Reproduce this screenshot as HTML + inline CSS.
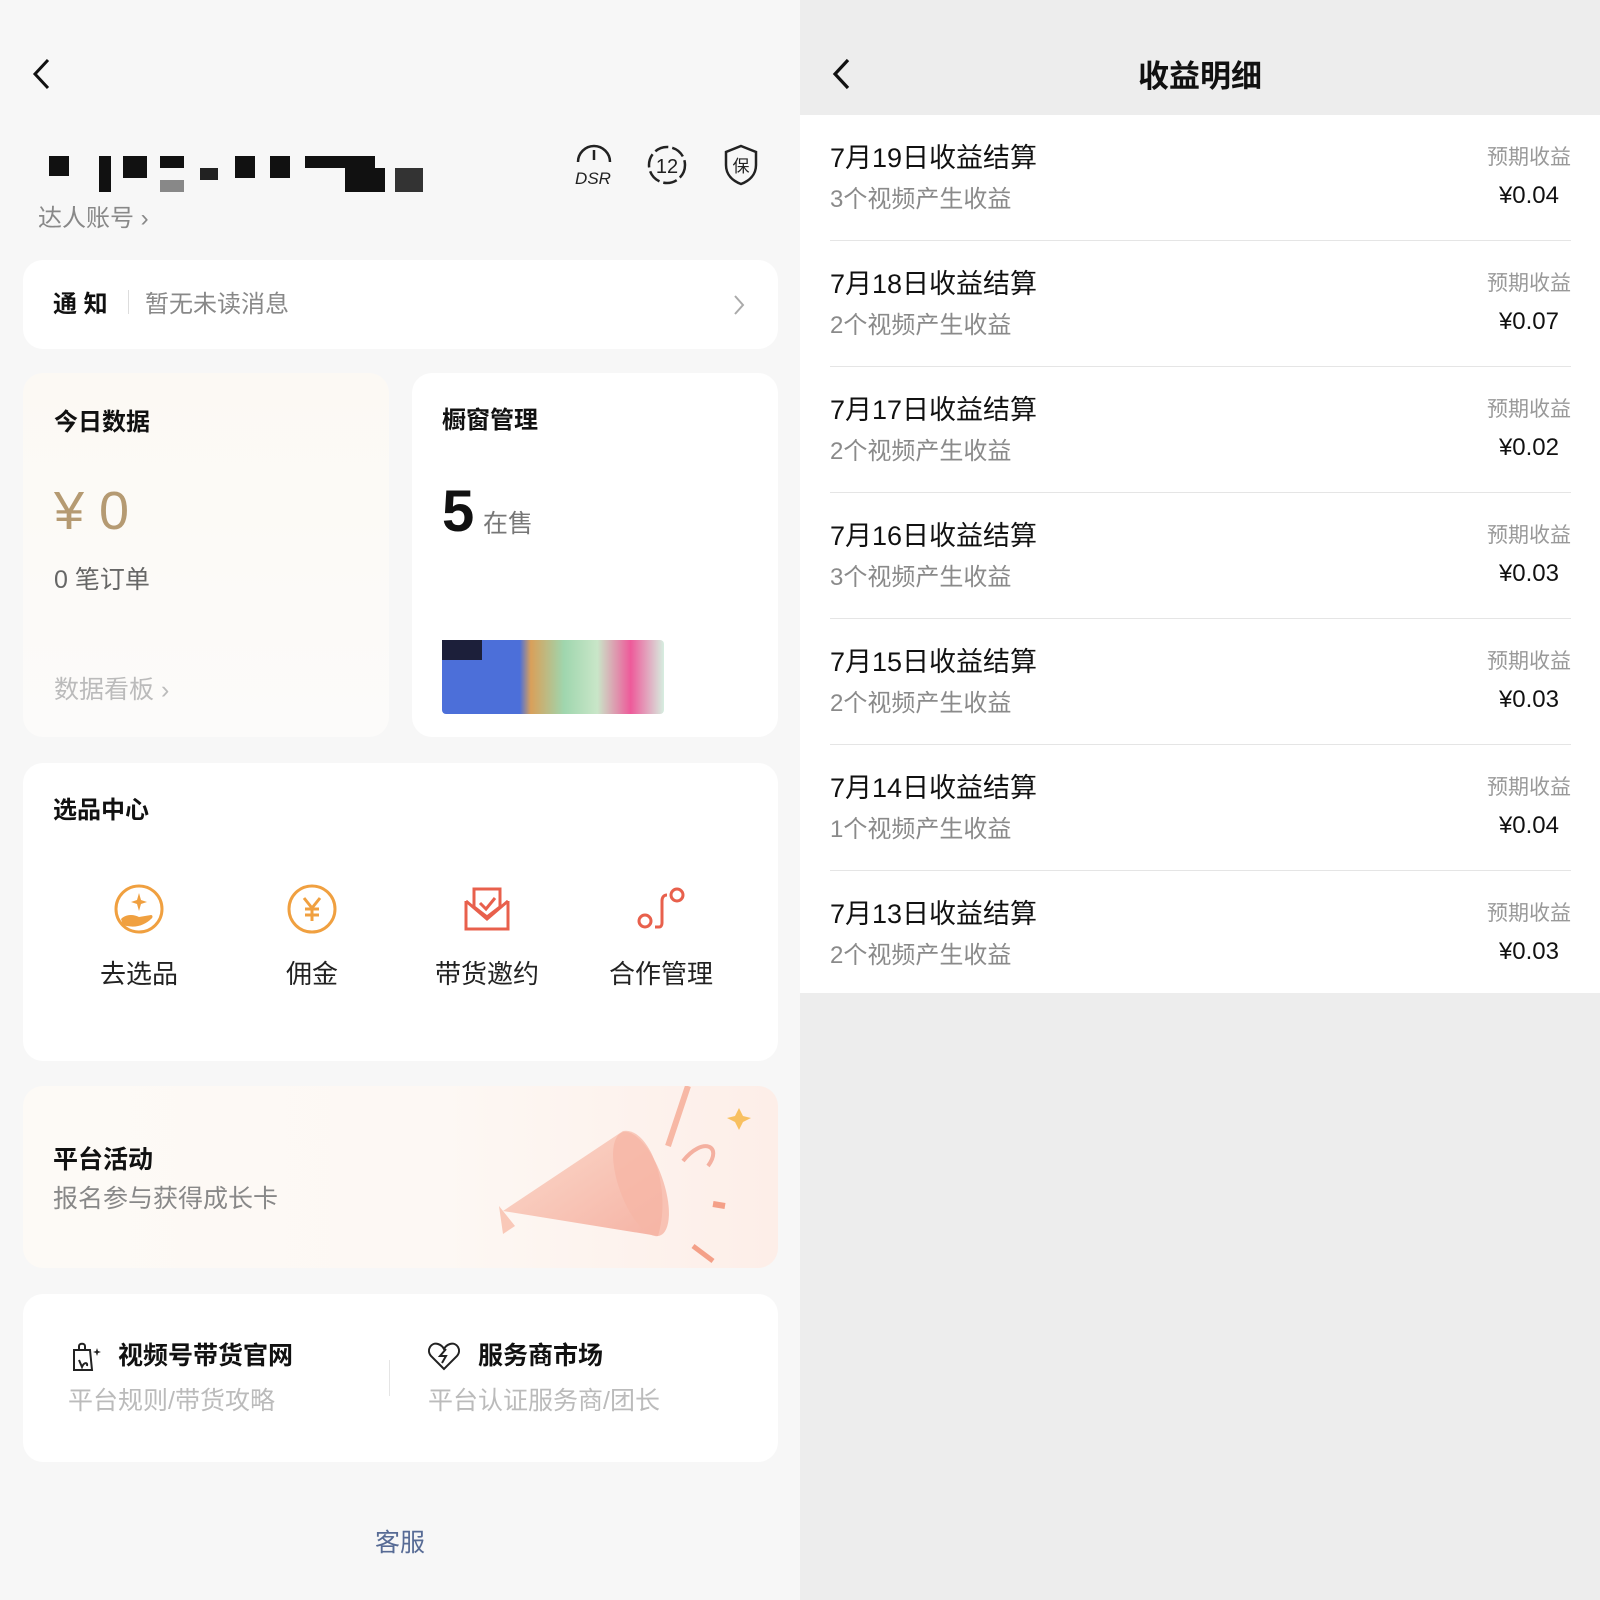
<!DOCTYPE html>
<html><head><meta charset="utf-8"><style>
*{margin:0;padding:0;box-sizing:border-box}
body{width:1600px;height:1600px;overflow:hidden;position:relative;font-family:"Liberation Sans","Noto Sans CJK SC",sans-serif;background:#f7f7f7}
.a{position:absolute;white-space:nowrap}
#L{position:absolute;left:0;top:0;width:800px;height:1600px;background:#f7f7f7}
#R{position:absolute;left:800px;top:0;width:800px;height:1600px;background:#ededed}
.card{position:absolute;background:#fff;border-radius:20px}
.t{font-size:24px;font-weight:bold;color:#111}
.g{color:#888;font-size:24px}
.row{position:absolute;left:0;width:800px;height:126px}
.row .h{position:absolute;left:30px;top:21px;font-size:27px;color:#111}
.row .s{position:absolute;left:30px;top:64px;font-size:24px;color:#8a8a8a}
.row .p{position:absolute;right:29px;top:26px;font-size:21px;color:#999}
.row .m{position:absolute;right:41px;top:67px;font-size:24px;color:#111}
.row .ln{position:absolute;left:30px;right:29px;bottom:0;height:1px;background:#e5e5e5}
</style></head><body>
<div id="L">
<svg class="a" style="left:30px;top:58px" width="24" height="32" viewBox="0 0 24 32"><path d="M18 2 L5 16 L18 30" fill="none" stroke="#111" stroke-width="3"/></svg>
<div class="a" style="left:49px;top:156px;width:20px;height:20px;background:#111"></div>
<div class="a" style="left:99px;top:156px;width:12px;height:36px;background:#111"></div>
<div class="a" style="left:123px;top:156px;width:24px;height:22px;background:#111"></div>
<div class="a" style="left:160px;top:156px;width:24px;height:12px;background:#111"></div>
<div class="a" style="left:160px;top:180px;width:24px;height:12px;background:#888"></div>
<div class="a" style="left:200px;top:168px;width:18px;height:12px;background:#222"></div>
<div class="a" style="left:235px;top:156px;width:20px;height:22px;background:#111"></div>
<div class="a" style="left:270px;top:156px;width:20px;height:22px;background:#111"></div>
<div class="a" style="left:305px;top:156px;width:70px;height:12px;background:#111"></div>
<div class="a" style="left:345px;top:168px;width:40px;height:24px;background:#111"></div>
<div class="a" style="left:395px;top:168px;width:28px;height:24px;background:#333"></div>
<div class="a" style="left:38px;top:198px;font-size:24px;color:#888">达人账号 ›</div>
<svg class="a" style="left:572px;top:142px" width="44" height="44" viewBox="0 0 44 44"><path d="M6 20 A16 16 0 0 1 38 20" fill="none" stroke="#222" stroke-width="2.5"/><path d="M22 8 V18" stroke="#222" stroke-width="2.5"/><text x="21" y="42" font-size="17" font-style="italic" font-family="Liberation Sans" text-anchor="middle" fill="#222">DSR</text></svg>
<svg class="a" style="left:646px;top:144px" width="42" height="42" viewBox="0 0 42 42"><circle cx="21" cy="21" r="18" fill="none" stroke="#222" stroke-width="2.5" stroke-dasharray="14 4"/><text x="21" y="29" font-size="20" font-family="Liberation Sans" text-anchor="middle" fill="#222">12</text></svg>
<svg class="a" style="left:722px;top:143px" width="38" height="44" viewBox="0 0 38 44"><path d="M19 3 L34 9 V22 C34 32 27 38 19 41 C11 38 4 32 4 22 V9 Z" fill="none" stroke="#222" stroke-width="2.5"/><text x="19" y="29" font-size="17" font-family="Noto Sans CJK SC" text-anchor="middle" fill="#222">保</text></svg>

<div class="card" style="left:23px;top:260px;width:755px;height:89px"></div>
<div class="a t" style="left:53px;top:284px">通 知</div>
<div class="a" style="left:128px;top:290px;width:1px;height:24px;background:#ddd"></div>
<div class="a g" style="left:145px;top:284px">暂无未读消息</div>
<svg class="a" style="left:732px;top:294px" width="14" height="22" viewBox="0 0 14 22"><path d="M3 2 L11 11 L3 20" fill="none" stroke="#aaa" stroke-width="2"/></svg>

<div class="card" style="left:23px;top:373px;width:366px;height:364px;background:linear-gradient(180deg,#fcf9f4,#fcfbfa)"></div>
<div class="a t" style="left:54px;top:402px">今日数据</div>
<div class="a" style="left:54px;top:480px;font-size:54px;color:#b59a72">¥ 0</div>
<div class="a" style="left:54px;top:560px;font-size:25px;color:#666">0 笔订单</div>
<div class="a" style="left:54px;top:670px;font-size:25px;color:#bbb">数据看板 ›</div>

<div class="card" style="left:412px;top:373px;width:366px;height:364px"></div>
<div class="a t" style="left:442px;top:400px">橱窗管理</div>
<div class="a" style="left:442px;top:478px;font-size:58px;font-weight:bold;color:#111">5</div>
<div class="a" style="left:483px;top:504px;font-size:25px;color:#777">在售</div>
<div class="a" style="left:442px;top:640px;width:222px;height:74px;background:linear-gradient(90deg,#4c6fd9 0,#4c6fd9 35%,#d9a05a 40%,#9fd6ae 55%,#c9e6c8 70%,#ee5a9a 85%,#d6eee0 100%);border-radius:4px"></div>
<div class="a" style="left:442px;top:640px;width:40px;height:20px;background:#1c1f3a"></div>

<div class="card" style="left:23px;top:763px;width:755px;height:298px"></div>
<div class="a t" style="left:53px;top:790px">选品中心</div>
<svg class="a" style="left:113px;top:883px" width="52" height="52" viewBox="0 0 52 52"><circle cx="26" cy="26" r="23" fill="none" stroke="#f0a040" stroke-width="3"/><path d="M26 10 L28 17 L34 19 L28 21 L26 28 L24 21 L18 19 L24 17Z" fill="#f0a040"/><path d="M8 36 C14 30 22 32 26 34 L38 32 C40 32 40 35 38 36 C32 42 22 46 10 42Z" fill="#f0a040"/></svg>
<svg class="a" style="left:286px;top:883px" width="52" height="52" viewBox="0 0 52 52"><circle cx="26" cy="26" r="23" fill="none" stroke="#f0a040" stroke-width="3"/><path d="M18 15 L26 25 L34 15 M26 25 V38 M19 26 H33 M19 32 H33" fill="none" stroke="#f0a040" stroke-width="3"/></svg>
<svg class="a" style="left:461px;top:883px" width="52" height="52" viewBox="0 0 52 52"><path d="M5 18 V46 H47 V18" fill="none" stroke="#e8604c" stroke-width="3"/><path d="M13 24 V6 H39 V24 L26 34 Z" fill="none" stroke="#e8604c" stroke-width="3"/><path d="M19 20 L25 26 L34 15" fill="none" stroke="#e8604c" stroke-width="3"/><path d="M5 18 L26 36 L47 18" fill="none" stroke="#e8604c" stroke-width="3"/></svg>
<svg class="a" style="left:635px;top:883px" width="52" height="52" viewBox="0 0 52 52"><circle cx="10" cy="38" r="6" fill="none" stroke="#e8604c" stroke-width="3"/><circle cx="42" cy="12" r="6" fill="none" stroke="#e8604c" stroke-width="3"/><path d="M20 44 H24 C26 44 27 42 27 40 V18 C27 14 29 12 32 12" fill="none" stroke="#e8604c" stroke-width="3"/></svg>
<div class="a" style="left:89px;top:954px;width:100px;text-align:center;font-size:26px;color:#222">去选品</div>
<div class="a" style="left:262px;top:954px;width:100px;text-align:center;font-size:26px;color:#222">佣金</div>
<div class="a" style="left:427px;top:954px;width:120px;text-align:center;font-size:26px;color:#222">带货邀约</div>
<div class="a" style="left:601px;top:954px;width:120px;text-align:center;font-size:26px;color:#222">合作管理</div>

<div class="card" style="left:23px;top:1086px;width:755px;height:182px;background:linear-gradient(90deg,#fdfaf6 0,#fdf8f4 55%,#fdeee8 100%);overflow:hidden">
<svg style="position:absolute;left:450px;top:0" width="305" height="182" viewBox="0 0 305 182"><defs><linearGradient id="mg" x1="0" y1="0" x2="1" y2="1"><stop offset="0" stop-color="#fbd5c5"/><stop offset="1" stop-color="#f4a898"/></linearGradient></defs><path d="M30 125 L150 45 C175 40 200 100 185 150 Z" fill="url(#mg)" opacity=".85"/><ellipse cx="168" cy="98" rx="22" ry="55" transform="rotate(-20 168 98)" fill="#f6b6a6" opacity=".8"/><path d="M26 120 L42 140 L30 148 Z" fill="#f9c8b8"/><path d="M215 0 L195 60" stroke="#f4a088" stroke-width="6" fill="none" opacity=".7"/><path d="M210 75 C230 50 250 60 235 80" stroke="#f4b0a0" stroke-width="4" fill="none"/><path d="M262 30 L266 22 L270 30 L278 32 L270 36 L266 44 L262 36 L254 32Z" fill="#f8c060"/><path d="M240 118 L252 120" stroke="#f4a088" stroke-width="6"/><path d="M220 160 L240 175" stroke="#f4a088" stroke-width="5"/></svg>
</div>
<div class="a t" style="left:53px;top:1140px;font-size:25px">平台活动</div>
<div class="a" style="left:53px;top:1179px;font-size:25px;color:#888">报名参与获得成长卡</div>

<div class="card" style="left:23px;top:1294px;width:755px;height:168px"></div>
<svg class="a" style="left:70px;top:1340px" width="34" height="34" viewBox="0 0 34 34"><path d="M4 10 H20 L22 30 H4 Z M9 10 V6 C9 3 15 3 15 6 V10" fill="none" stroke="#222" stroke-width="2"/><path d="M9 20 L12 27 C14 22 18 22 17 26" fill="none" stroke="#222" stroke-width="2"/><path d="M27 8 L28 11 L31 12 L28 13 L27 16 L26 13 L23 12 L26 11Z" fill="#222"/></svg>
<div class="a t" style="left:118px;top:1336px;font-size:25px">视频号带货官网</div>
<div class="a" style="left:68px;top:1381px;font-size:25px;color:#bbb">平台规则/带货攻略</div>
<div class="a" style="left:389px;top:1360px;width:1px;height:36px;background:#e5e5e5"></div>
<svg class="a" style="left:427px;top:1340px" width="34" height="32" viewBox="0 0 34 32"><path d="M17 29 L4 16 C-1 10 4 2 11 4 C14 5 16 7 17 9 C18 7 20 5 23 4 C30 2 35 10 30 16 Z" fill="none" stroke="#222" stroke-width="2"/><path d="M19 9 L13 16 H19 L15 23" fill="none" stroke="#222" stroke-width="2"/></svg>
<div class="a t" style="left:478px;top:1336px;font-size:25px">服务商市场</div>
<div class="a" style="left:428px;top:1381px;font-size:25px;color:#bbb">平台认证服务商/团长</div>
<div class="a" style="left:360px;top:1523px;width:80px;text-align:center;font-size:25px;color:#576b95">客服</div>
</div>

<div id="R">
<svg class="a" style="left:30px;top:58px" width="24" height="32" viewBox="0 0 24 32"><path d="M18 2 L5 16 L18 30" fill="none" stroke="#111" stroke-width="3.2"/></svg>
<div class="a" style="left:300px;top:51px;width:200px;text-align:center;font-size:31px;font-weight:bold;color:#111">收益明细</div>
<div class="a" style="left:0;top:115px;width:800px;height:878px;background:#fff"></div>
<div class="row" style="top:115px"><div class="h">7月19日收益结算</div><div class="s">3个视频产生收益</div><div class="p">预期收益</div><div class="m">¥0.04</div><div class="ln"></div></div>
<div class="row" style="top:241px"><div class="h">7月18日收益结算</div><div class="s">2个视频产生收益</div><div class="p">预期收益</div><div class="m">¥0.07</div><div class="ln"></div></div>
<div class="row" style="top:367px"><div class="h">7月17日收益结算</div><div class="s">2个视频产生收益</div><div class="p">预期收益</div><div class="m">¥0.02</div><div class="ln"></div></div>
<div class="row" style="top:493px"><div class="h">7月16日收益结算</div><div class="s">3个视频产生收益</div><div class="p">预期收益</div><div class="m">¥0.03</div><div class="ln"></div></div>
<div class="row" style="top:619px"><div class="h">7月15日收益结算</div><div class="s">2个视频产生收益</div><div class="p">预期收益</div><div class="m">¥0.03</div><div class="ln"></div></div>
<div class="row" style="top:745px"><div class="h">7月14日收益结算</div><div class="s">1个视频产生收益</div><div class="p">预期收益</div><div class="m">¥0.04</div><div class="ln"></div></div>
<div class="row" style="top:871px"><div class="h">7月13日收益结算</div><div class="s">2个视频产生收益</div><div class="p">预期收益</div><div class="m">¥0.03</div></div>
</div>
</body></html>
